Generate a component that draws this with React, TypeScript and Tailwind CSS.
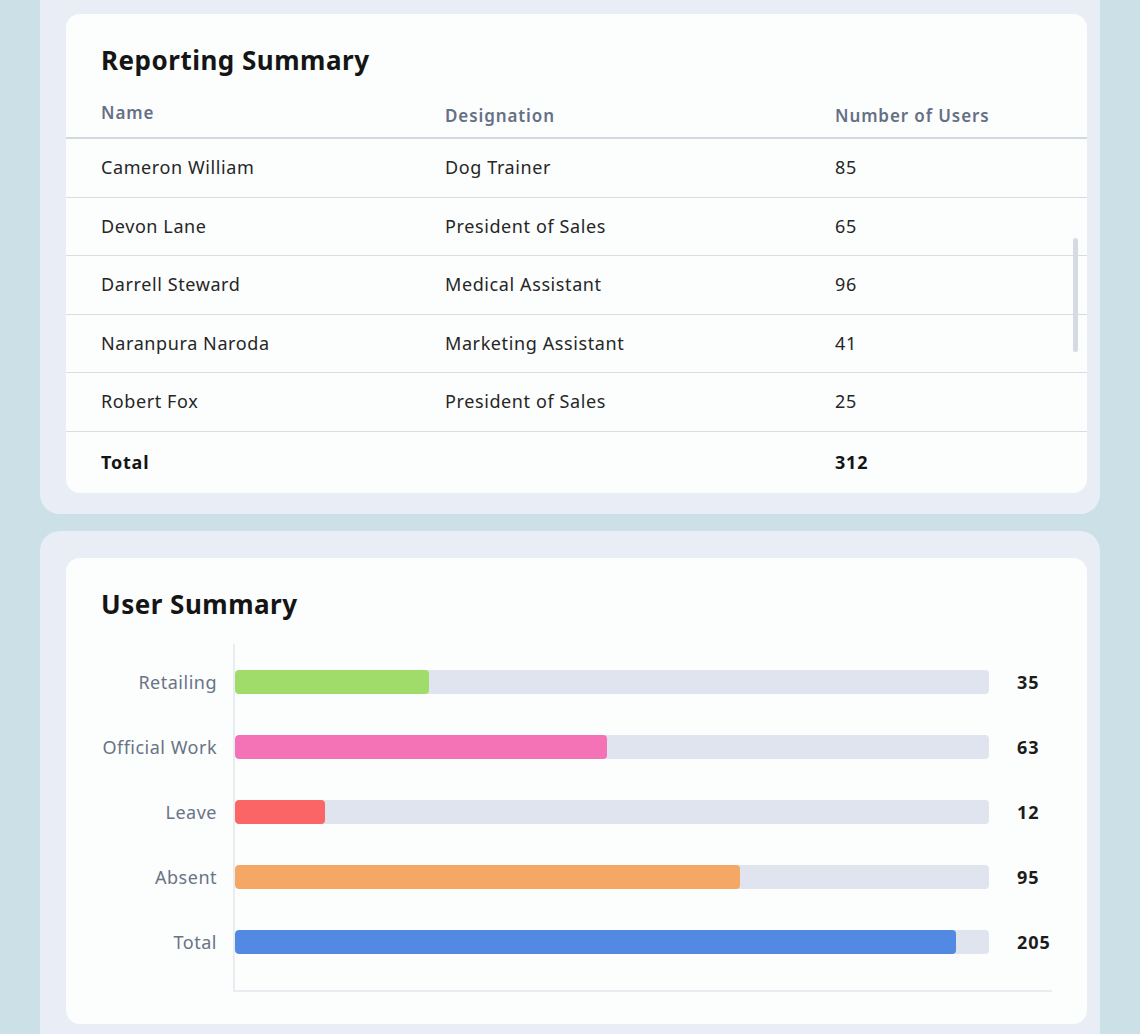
const ROWS = [
  { name: 'Cameron William', role: 'Dog Trainer', users: 85 },
  { name: 'Devon Lane', role: 'President of Sales', users: 65 },
  { name: 'Darrell Steward', role: 'Medical Assistant', users: 96 },
  { name: 'Naranpura Naroda', role: 'Marketing Assistant', users: 41 },
  { name: 'Robert Fox', role: 'President of Sales', users: 25 },
]

const BARS = [
  { label: 'Retailing', value: 35, fill: 0.257, color: 'bg-[#a0dc6a]' },
  { label: 'Official Work', value: 63, fill: 0.493, color: 'bg-[#f472b6]' },
  { label: 'Leave', value: 12, fill: 0.119, color: 'bg-[#fb6565]' },
  { label: 'Absent', value: 95, fill: 0.67, color: 'bg-[#f5a865]' },
  { label: 'Total', value: 205, fill: 0.956, color: 'bg-[#5289e2]' },
]

function ReportingSummary() {
  const total = ROWS.reduce((sum, r) => sum + r.users, 0)

  return (
    <div className="relative ml-[26px] mr-[13px] rounded-[14px] bg-[#fcfdfd] pt-[30px]">
      <h2 className="px-[35px] text-[26px] font-bold leading-[32px] tracking-[0.5px] text-[#151515]">Reporting Summary</h2>

      <div className="mt-[28px] grid grid-cols-[344px_390px_1fr] border-b-2 border-[#d3d8e2] px-[35px] pb-[9px] text-[17px] font-semibold leading-6 tracking-[0.9px] text-[#667085]">
        <span className="-mt-[3px]">Name</span>
        <span>Designation</span>
        <span>Number of Users</span>
      </div>

      {ROWS.map((r) => (
        <div
          key={r.name}
          className="grid h-[58.5px] grid-cols-[344px_390px_1fr] items-center border-b border-[#d9dde3] px-[35px] text-[18px] tracking-[0.6px] text-[#262626]"
        >
          <span>{r.name}</span>
          <span>{r.role}</span>
          <span>{r.users}</span>
        </div>
      ))}

      <div className="grid h-[61px] grid-cols-[344px_390px_1fr] items-center px-[35px] text-[18px] font-bold tracking-[0.8px] text-[#151515]">
        <span>Total</span>
        <span />
        <span>{total}</span>
      </div>

      {/* scroll thumb */}
      <div className="absolute right-[9px] top-[224px] h-[114px] w-[5px] rounded-full bg-[#d6dbe3]" />
    </div>
  )
}

function UserSummary() {
  return (
    <div className="ml-[26px] mr-[13px] rounded-[14px] bg-[#fcfdfd] px-[35px] pb-[32px] pt-[30px]">
      <h2 className="text-[26px] font-bold leading-[32px] tracking-[0.5px] text-[#151515]">User Summary</h2>

      <div className="mt-[24px] flex">
        <div className="w-[132px] pb-[15px] pt-[6px]">
          {BARS.map((b) => (
            <div key={b.label} className="flex h-[65px] items-center justify-end pr-4 text-[18px] tracking-[0.5px] text-[#697386]">
              {b.label}
            </div>
          ))}
        </div>

        <div className="flex-1 border-b-2 border-l-2 border-[#e9ecf1] pb-[15px] pt-[6px]">
          {BARS.map((b) => (
            <div key={b.label} className="flex h-[65px] items-center">
              <div className="h-6 w-[754px] overflow-hidden rounded-[4px] bg-[#e0e4ee]">
                <div className={`h-full rounded-[4px] ${b.color}`} style={{ width: `${b.fill * 100}%` }} />
              </div>
              <span className="ml-7 text-[18px] font-bold tracking-[0.9px] text-[#1c1c1c]">{b.value}</span>
            </div>
          ))}
        </div>
      </div>
    </div>
  )
}

export default function App() {
  return (
    <div className="min-h-[1034px] bg-[#cbe0e7] pl-[40px] font-['Noto_Sans',sans-serif]">
      <div className="w-[1060px]">
        <section className="rounded-b-[20px] bg-[#e9eef6] pb-[21px] pt-[14px]">
          <ReportingSummary />
        </section>
        <section className="mt-[17px] rounded-t-[20px] bg-[#e9eef6] pb-[21px] pt-[27px]">
          <UserSummary />
        </section>
      </div>
    </div>
  )
}
